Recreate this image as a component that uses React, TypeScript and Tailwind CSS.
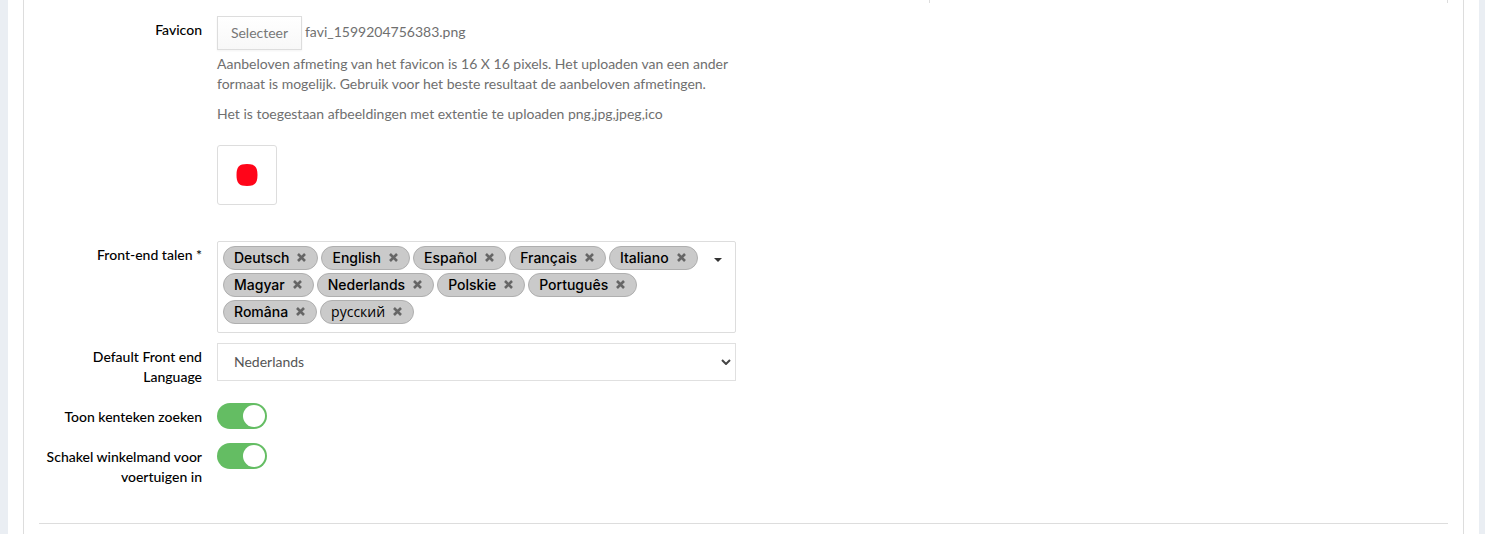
import { useState, type ReactNode } from "react";

const LANGUAGES = [
  "Deutsch",
  "English",
  "Español",
  "Français",
  "Italiano",
  "Magyar",
  "Nederlands",
  "Polskie",
  "Português",
  "Româna",
  "русский",
];

interface RowProps {
  label: string;
  htmlFor: string;
  className?: string;
  children: ReactNode;
}

function FormRow({ label, htmlFor, className, children }: RowProps) {
  return (
    <div className={`flex items-start gap-[15px] ${className ?? ""}`}>
      <label htmlFor={htmlFor} className="w-[163px] shrink-0 pt-1 text-right font-medium text-black">
        {label}
      </label>
      <div className="min-w-0 flex-1">{children}</div>
    </div>
  );
}

function Tag({ name, onRemove }: { name: string; onRemove: () => void }) {
  // Cyrillic names get a lighter face
  const cyrillic = /[а-я]/i.test(name);

  return (
    <span className="flex h-6 items-center gap-2 rounded-full border border-[#afafaf] bg-[#cacaca] pr-[11px] pb-px pl-2.5 text-black">
      <span className={cyrillic ? "font-['Open_Sans',sans-serif] font-normal" : "font-['Inter',sans-serif] font-medium"}>
        {name}
      </span>
      <button type="button" aria-label={`${name} verwijderen`} onClick={onRemove} className="text-[#666]">
        <svg viewBox="0 0 9 9" className="h-[9px] w-[9px]" fill="none" stroke="currentColor" strokeWidth="2.6">
          <path d="M1 1l7 7M8 1L1 8" />
        </svg>
      </button>
    </span>
  );
}

function Toggle({ id }: { id: string }) {
  const [on, setOn] = useState(true);

  return (
    <span className="relative block h-[26px] w-[50px]">
      <input
        id={id}
        type="checkbox"
        checked={on}
        onChange={(e) => setOn(e.target.checked)}
        className="peer block h-[26px] w-[50px] cursor-pointer appearance-none rounded-full bg-[#ccc] checked:bg-[#64bd63]"
      />
      <span className="pointer-events-none absolute top-0.5 left-0.5 h-[22px] w-[22px] rounded-full bg-white peer-checked:right-0.5 peer-checked:left-auto" />
    </span>
  );
}

export default function App() {
  const [languages, setLanguages] = useState(LANGUAGES);
  const [defaultLanguage, setDefaultLanguage] = useState("Nederlands");

  return (
    <div className="min-h-screen bg-[#eaeef3] pr-1.5 pl-2 font-['Lato','Open_Sans',sans-serif] text-[14px] leading-5 text-[#6f6f6f] [font-variant-ligatures:none]">
      <main className="min-h-screen bg-white px-[15px]">
        <div className="min-h-screen border-x border-[#ddd] px-[15px]">
          <div className="grid grid-cols-2 gap-x-[15px]">
            <form className="pt-4">
              <FormRow label="Favicon" htmlFor="favicon">
                <div className="flex items-start gap-[3px]">
                  <button
                    id="favicon"
                    type="button"
                    className="h-[34px] w-[85px] border border-[#ddd] bg-linear-to-b from-white to-[#f8f8f8] text-[#777] shadow-xs"
                  >
                    Selecteer
                  </button>
                  <span className="pt-1.5">favi_1599204756383.png</span>
                </div>
                <p className="mt-1">
                  Aanbeloven afmeting van het favicon is 16 X 16 pixels. Het uploaden van een ander formaat is mogelijk.
                  Gebruik voor het beste resultaat de aanbeloven afmetingen.
                </p>
                <p className="mt-2.5">Het is toegestaan afbeeldingen met extentie te uploaden png,jpg,jpeg,ico</p>
                <div className="mt-[21px] flex h-[60px] w-[60px] items-center justify-center rounded-[3px] border border-[#ddd]">
                  <svg viewBox="0 0 22 22" className="h-[22px] w-[22px]">
                    <path d="M11 0C19 0 21.5 3 21.5 11S19 22 11 22 .5 19 .5 11 3 0 11 0Z" fill="#ff0519" />
                  </svg>
                </div>
              </FormRow>

              <FormRow label="Front-end talen *" htmlFor="languages" className="mt-9">
                <div className="flex min-h-[92px] rounded-[2px] border border-[#ddd] pt-1 pb-2 pl-[5px]">
                  <div className="flex flex-1 flex-wrap content-start gap-[3px]">
                    {languages.map((name) => (
                      <Tag key={name} name={name} onRemove={() => setLanguages(languages.filter((l) => l !== name))} />
                    ))}
                  </div>
                  <button id="languages" type="button" aria-label="Talen kiezen" className="h-7 w-[34px] shrink-0">
                    <svg viewBox="0 0 8 4" className="mx-auto h-1 w-2" fill="#333">
                      <path d="M0 0h8L4 4z" />
                    </svg>
                  </button>
                </div>
              </FormRow>

              <FormRow label="Default Front end Language" htmlFor="default-language" className="mt-2.5">
                <div className="relative">
                  <select
                    id="default-language"
                    value={defaultLanguage}
                    onChange={(e) => setDefaultLanguage(e.target.value)}
                    className="block h-[38px] w-full appearance-none border border-[#e0e0e0] bg-white px-4 text-[#555]"
                  >
                    {LANGUAGES.map((name) => (
                      <option key={name}>{name}</option>
                    ))}
                  </select>
                  <svg
                    viewBox="0 0 10 6"
                    className="pointer-events-none absolute top-4 right-[5px] h-1.5 w-2.5"
                    fill="none"
                    stroke="#444"
                    strokeWidth="2"
                  >
                    <path d="M1 1l4 4 4-4" />
                  </svg>
                </div>
              </FormRow>

              <FormRow label="Toon kenteken zoeken" htmlFor="plate-search" className="mt-4">
                <Toggle id="plate-search" />
              </FormRow>

              <FormRow label="Schakel winkelmand voor voertuigen in" htmlFor="vehicle-cart" className="mt-3.5">
                <Toggle id="vehicle-cart" />
              </FormRow>
            </form>

            {/* Tail of the panel in the right column */}
            <div className="pl-[178px]">
              <div className="h-[3px] border-x border-[#ddd]" />
            </div>
          </div>

          <hr className="mt-9 border-[#ddd]" />
        </div>
      </main>
    </div>
  );
}
